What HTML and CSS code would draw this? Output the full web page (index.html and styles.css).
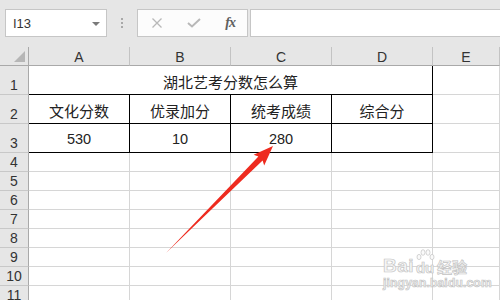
FILE: index.html
```html
<!DOCTYPE html>
<html>
<head>
<meta charset="utf-8">
<link rel="stylesheet" href="styles.css">
</head>
<body>
<div class="app">
  <div class="toolbar">
    <div class="namebox"><span class="ref">I13</span><span class="caret"></span></div>
    <div class="sep"><i></i><i></i><i></i></div>
    <div class="fbtns">
      <svg class="ico" width="12" height="10" viewBox="0 0 12 10"><path d="M1.5 0.5 L10.5 9.5 M10.5 0.5 L1.5 9.5" stroke="#b8b8b8" stroke-width="1.3" fill="none"/></svg>
      <svg class="ico" width="14" height="10" viewBox="0 0 14 10"><path d="M1 5 L5 8.5 L13 1" stroke="#b8b8b8" stroke-width="2" fill="none"/></svg>
      <span class="fx">fx</span>
    </div>
    <div class="finput"></div>
  </div>
  <div class="sheet">
    <div class="h corner"><span class="tri"></span></div>
    <div class="h col">A</div><div class="h col">B</div><div class="h col">C</div><div class="h col">D</div><div class="h col">E</div>

    <div class="h row">1</div>
    <div class="c merged bb br">湖北艺考分数怎么算</div>
    <div class="c"></div>

    <div class="h row">2</div>
    <div class="c bb br">文化分数</div><div class="c bb br">优录加分</div><div class="c bb br">统考成绩</div><div class="c bb br">综合分</div><div class="c"></div>

    <div class="h row">3</div>
    <div class="c bb br num">530</div><div class="c bb br num">10</div><div class="c bb br num">280</div><div class="c bb br"></div><div class="c"></div>

    <div class="h row">4</div><div class="c"></div><div class="c"></div><div class="c"></div><div class="c"></div><div class="c"></div>
    <div class="h row">5</div><div class="c"></div><div class="c"></div><div class="c"></div><div class="c"></div><div class="c"></div>
    <div class="h row">6</div><div class="c"></div><div class="c"></div><div class="c"></div><div class="c"></div><div class="c"></div>
    <div class="h row">7</div><div class="c"></div><div class="c"></div><div class="c"></div><div class="c"></div><div class="c"></div>
    <div class="h row">8</div><div class="c"></div><div class="c"></div><div class="c"></div><div class="c"></div><div class="c"></div>
    <div class="h row">9</div><div class="c"></div><div class="c"></div><div class="c"></div><div class="c"></div><div class="c"></div>
    <div class="h row">10</div><div class="c"></div><div class="c"></div><div class="c"></div><div class="c"></div><div class="c"></div>
    <div class="h row">11</div><div class="c"></div><div class="c"></div><div class="c"></div><div class="c"></div><div class="c"></div>
  </div>

  <svg class="arrow" width="500" height="300" viewBox="0 0 500 300">
    <polygon points="273,146 264.2,165.4 262.6,160.6 166,253 258.4,156.4 253.6,154.8" fill="#ee2b1f"/>
  </svg>

  <div class="wm">
    <div class="wm-top">
      <span class="wm-bai">Bai</span>
      <span class="wm-du">
        <svg class="paw" width="20" height="12" viewBox="0 0 20 12">
          <ellipse cx="4" cy="8" rx="2" ry="2.6" fill="#fafafa" stroke="#c9c9c9" stroke-width="0.8"/>
          <ellipse cx="8" cy="3.5" rx="2" ry="2.8" fill="#fafafa" stroke="#c9c9c9" stroke-width="0.8"/>
          <ellipse cx="13" cy="3.5" rx="2" ry="2.8" fill="#fafafa" stroke="#c9c9c9" stroke-width="0.8"/>
          <ellipse cx="17" cy="8" rx="2" ry="2.6" fill="#fafafa" stroke="#c9c9c9" stroke-width="0.8"/>
        </svg>
        <span class="wm-dut">du</span>
      </span>
      <span class="wm-jy">经验</span>
    </div>
    <div class="wm-url">jingyan.baidu.com</div>
  </div>
</div>
</body>
</html>
```
FILE: styles.css
```css
html, body {
  margin: 0;
  padding: 0;
  width: 500px;
  height: 300px;
  overflow: hidden;
  background: #e6e6e6;
}
.app {
  position: relative;
  width: 500px;
  height: 300px;
  overflow: hidden;
  font-family: "Liberation Sans", "Noto Sans CJK SC", sans-serif;
  color: #222;
}
.toolbar {
  height: 47px;
  box-sizing: border-box;
  padding: 9px 0 0 5px;
  display: flex;
  align-items: flex-start;
  background: #e6e6e6;
}
.namebox {
  width: 102px;
  height: 28px;
  box-sizing: border-box;
  border: 1px solid #c6c6c6;
  background: #fff;
  display: flex;
  align-items: center;
  justify-content: space-between;
  padding: 0 6px 0 7px;
}
.ref {
  font-size: 13px;
  color: #333;
  padding-top: 1px;
}
.caret {
  width: 0;
  height: 0;
  border-left: 4px solid transparent;
  border-right: 4px solid transparent;
  border-top: 4px solid #7a7a7a;
  margin-top: 1px;
}
.sep {
  width: 30px;
  height: 28px;
  display: flex;
  flex-direction: column;
  align-items: center;
  justify-content: center;
  gap: 2px;
}
.sep i {
  width: 2px;
  height: 2px;
  background: #a8a8a8;
}
.fbtns {
  width: 111px;
  height: 28px;
  box-sizing: border-box;
  border: 1px solid #c6c6c6;
  background: #fcfcfc;
  display: flex;
  align-items: center;
  padding: 0 12px 0 13px;
  justify-content: space-between;
}
.ico { display: block; }
.fx {
  font-family: "Liberation Serif", serif;
  font-style: italic;
  font-weight: bold;
  font-size: 14px;
  color: #606060;
  letter-spacing: -1px;
}
.finput {
  flex: 1;
  margin-left: 2px;
  height: 28px;
  box-sizing: border-box;
  border: 1px solid #c6c6c6;
  border-right: none;
  background: #fff;
}
.sheet {
  display: grid;
  grid-template-columns: 29px 101px 101px 101px 101px 1fr;
  grid-template-rows: 19px 29px 29px 29px repeat(8, 19px);
  background: #fff;
}
.sheet > div {
  box-sizing: border-box;
}
.h {
  background: #e6e6e6;
  font-size: 14px;
  color: #333;
  display: flex;
  justify-content: center;
}
.col {
  border-right: 1px solid #c3c3c3;
  border-bottom: 1px solid #a9a9a9;
  align-items: center;
  padding-top: 2px;
}
.row {
  border-right: 1px solid #a9a9a9;
  border-bottom: 1px solid #c8c8c8;
  align-items: flex-end;
  padding-bottom: 0;
  line-height: 17px;
}
.corner {
  border-right: 1px solid #a9a9a9;
  border-bottom: 1px solid #a9a9a9;
  position: relative;
}
.tri {
  position: absolute;
  right: 3px;
  bottom: 3px;
  width: 0;
  height: 0;
  border-left: 11px solid transparent;
  border-bottom: 11px solid #b6b6b6;
}
.c {
  border-right: 1px solid #d6d6d6;
  border-bottom: 1px solid #d6d6d6;
  display: flex;
  align-items: center;
  justify-content: center;
  font-size: 15px;
  padding-top: 2px;
  color: #222;
}
.num {
  font-size: 14.5px;
}
.merged {
  grid-column: span 4;
}
.sheet > .bb { border-bottom: 1px solid #000; }
.sheet > .br { border-right: 1px solid #000; }
.arrow {
  position: absolute;
  left: 0;
  top: 0;
  pointer-events: none;
}
.wm {
  position: absolute;
  left: 383px;
  top: 248px;
  color: #f6f6f6;
  -webkit-text-stroke: 0.7px #c4c4c4;
}
.wm-top {
  display: flex;
  align-items: flex-end;
  height: 27px;
}
.wm-bai {
  font-family: "Liberation Sans", sans-serif;
  font-weight: bold;
  font-size: 19px;
  line-height: 19px;
  letter-spacing: 0.5px;
}
.wm-du {
  display: flex;
  flex-direction: column;
  align-items: center;
  margin-left: 1px;
}
.paw { display: block; margin-bottom: -1px; }
.wm-dut {
  font-family: "Liberation Sans", sans-serif;
  font-weight: bold;
  font-size: 15px;
  line-height: 15px;
}
.wm-jy {
  font-family: "Noto Sans CJK SC", sans-serif;
  font-weight: bold;
  font-size: 15px;
  line-height: 17px;
  margin-left: 2px;
}
.wm-url {
  font-family: "Liberation Sans", sans-serif;
  font-weight: bold;
  font-size: 12px;
  line-height: 13px;
  margin-top: 2px;
  letter-spacing: 0.2px;
}
```
